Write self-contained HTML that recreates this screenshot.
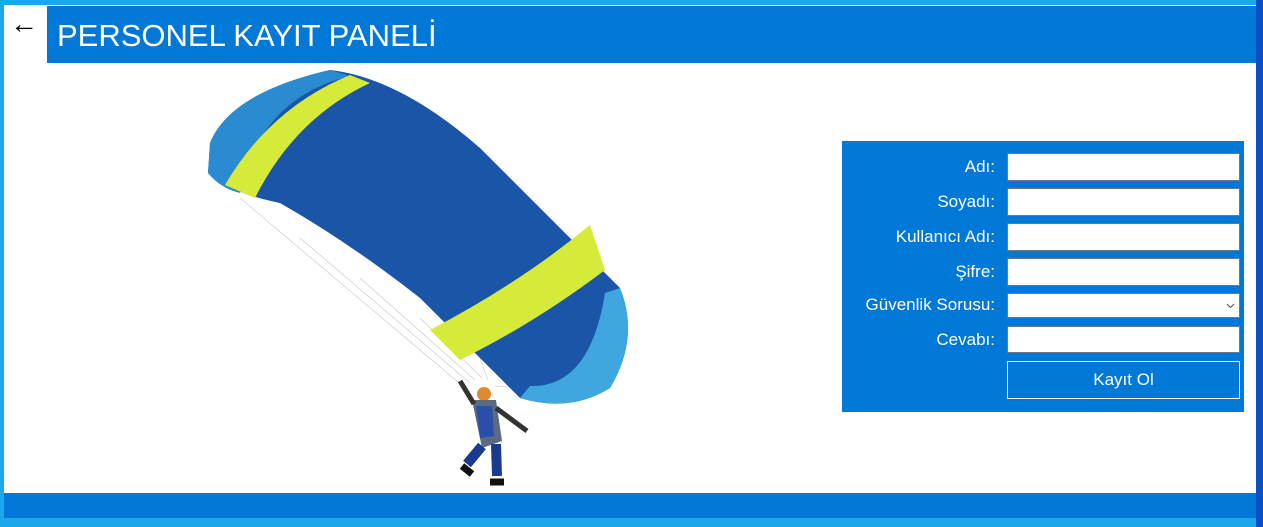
<!DOCTYPE html>
<html><head><meta charset="utf-8"><style>
*{margin:0;padding:0;box-sizing:border-box}
body{width:1263px;height:527px;overflow:hidden;background:#1aa7ec;position:relative;font-family:"Liberation Sans",Arial,sans-serif}
.rt{position:absolute;left:1256px;top:0;width:7px;height:527px;background:#0a4fc4}
.tp{position:absolute;left:0;top:0;width:1263px;height:4px;background:#1aa7ec}
.win{position:absolute;left:4px;top:5px;width:1252px;height:513px;background:#fff}
.hdr{position:absolute;left:47px;top:6px;width:1209px;height:57px;background:#0078d7;color:#fff;font-size:31px;line-height:60px;padding-left:10px}
.arr{position:absolute;left:10px;top:8px;font-size:28px;color:#000}
.bot{position:absolute;left:4px;top:493px;width:1252px;height:25px;background:#0078d7}
.panel{position:absolute;left:842px;top:141px;width:402px;height:271px;background:#0078d7}
.lab{position:absolute;right:249px;color:#fff;font-size:17px;text-align:right;white-space:nowrap}
.in{position:absolute;left:165px;width:233px;height:28px;background:#fff;border:1px solid #6a7a8a}
.btn{position:absolute;left:165px;top:220px;width:233px;height:38px;border:1px solid #fff;color:#fff;font-size:17px;text-align:center;line-height:36px}
</style></head><body>
<div class="tp"></div>
<div class="win"></div>
<div class="rt"></div>
<div class="arr">&#8592;</div>
<div class="hdr">PERSONEL KAYIT PANELİ</div>
<svg style="position:absolute;left:200px;top:68px" width="440" height="420" viewBox="0 0 440 420">
<g stroke="#ccc" stroke-width="0.7" fill="none">
<path d="M40 130 L265 320"/><path d="M100 170 L270 315"/><path d="M160 210 L275 312"/><path d="M220 250 L282 310"/><path d="M280 290 L288 312"/><path d="M330 320 L295 318"/>
</g>
<path d="M10 75 Q30 25 130 2 Q200 10 280 80 Q360 160 420 220 Q440 270 410 320 Q370 345 320 330 Q280 290 220 230 Q150 175 80 135 Q30 125 8 105 Z" fill="#1a55a8"/>
<path d="M10 75 Q30 25 130 2 L150 8 Q60 30 40 125 Q20 120 8 105 Z" fill="#2a8bd0"/>
<path d="M25 117 Q70 40 150 7 L170 15 Q95 50 55 130 Z" fill="#d6ea3a"/>
<path d="M230 262 Q320 215 390 157 L405 202 Q335 255 260 292 Z" fill="#d6ea3a"/>
<path d="M420 220 Q440 270 410 320 Q370 345 320 330 L330 318 Q390 320 405 225 Z" fill="#3fa6e0"/>
<g transform="translate(272,318)">
<circle cx="12" cy="8" r="7" fill="#e08a30"/>
<path d="M0 14 L24 14 L30 55 L10 62 Z" fill="#5a6a80"/>
<path d="M4 20 L20 20 L22 50 L8 52 Z" fill="#2a4fa8"/>
<path d="M-12 -5 L2 18" stroke="#333" stroke-width="5"/>
<path d="M24 22 L55 45" stroke="#333" stroke-width="5"/>
<path d="M10 60 L-5 78 M24 58 L25 90" stroke="#1a3a90" stroke-width="10"/>
<path d="M-10 80 L0 88 M18 96 L32 96" stroke="#111" stroke-width="7"/>
</g>
</svg>
<div class="bot"></div>
<div class="panel">
<div class="lab" style="top:16px">Adı:</div><div class="in" style="top:12px"></div>
<div class="lab" style="top:51px">Soyadı:</div><div class="in" style="top:47px"></div>
<div class="lab" style="top:86px">Kullanıcı Adı:</div><div class="in" style="top:82px"></div>
<div class="lab" style="top:121px">Şifre:</div><div class="in" style="top:117px"></div>
<div class="lab" style="top:154px">Güvenlik Sorusu:</div><div class="in" style="top:152px;height:25px"><svg style="position:absolute;right:4px;top:9px" width="9" height="6"><path d="M1 1L4.5 4.5L8 1" stroke="#555" fill="none"/></svg></div>
<div class="lab" style="top:189px">Cevabı:</div><div class="in" style="top:185px;height:27px"></div>
<div class="btn">Kayıt Ol</div>
</div>
</body></html>
